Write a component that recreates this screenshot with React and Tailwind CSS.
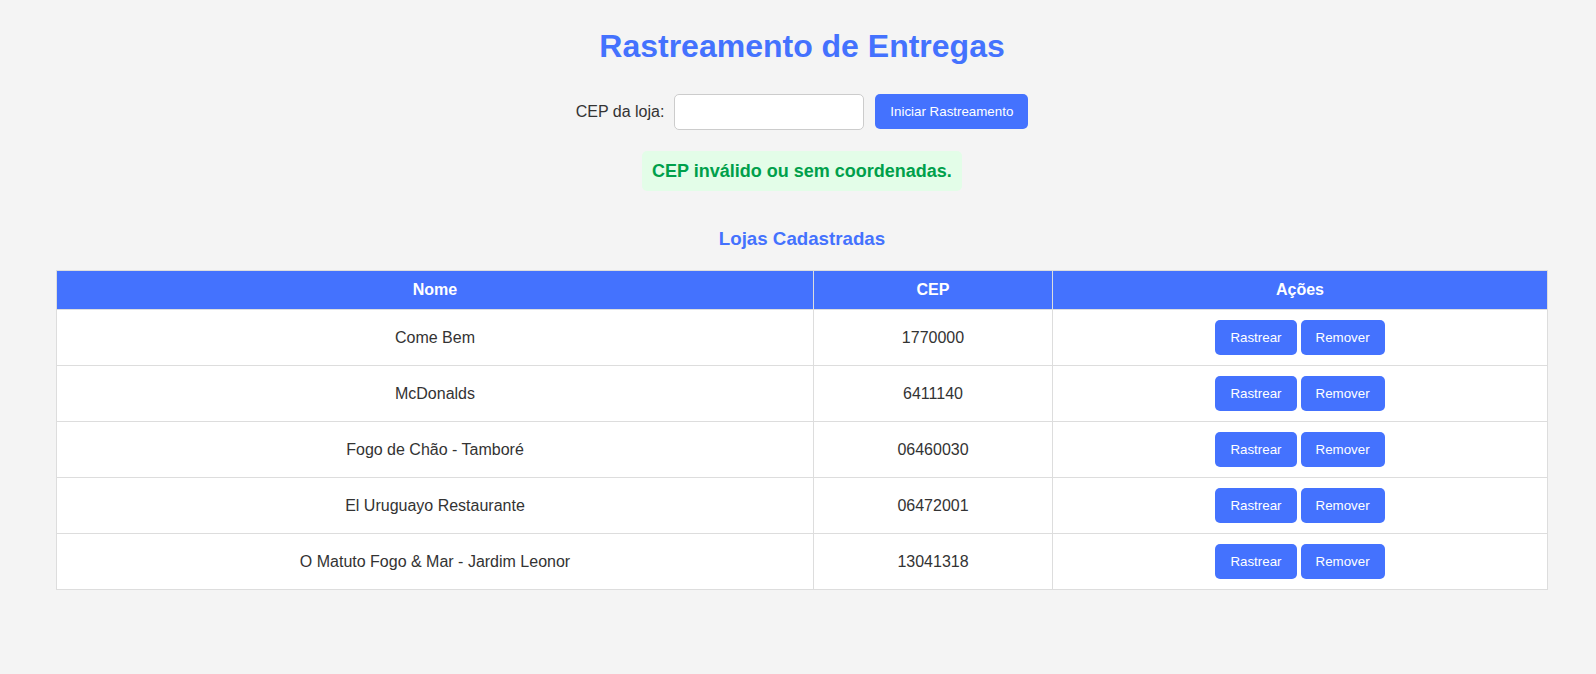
import React from "react";

const lojas = [
  { nome: "Come Bem", cep: "1770000" },
  { nome: "McDonalds", cep: "6411140" },
  { nome: "Fogo de Chão - Tamboré", cep: "06460030" },
  { nome: "El Uruguayo Restaurante", cep: "06472001" },
  { nome: "O Matuto Fogo & Mar - Jardim Leonor", cep: "13041318" },
];

export default function App() {
  return (
    <div
      className="min-h-screen bg-[#f4f4f4] pl-[56px] pr-[48px] pt-[28px] text-[#333]"
      style={{ fontFamily: '"Liberation Sans", Arial, sans-serif' }}
    >
      <h1 className="text-center text-[32px] font-bold leading-[1.15] text-[#4472fe]">
        Rastreamento de Entregas
      </h1>

      <div className="mt-[29px] flex items-center justify-center">
        <label className="mr-[10px] text-[16px] leading-[1.15] text-[#333]">CEP da loja:</label>
        <input
          type="text"
          className="h-[36px] w-[190px] rounded-[5px] border border-[#ccc] bg-white px-[8px] text-[16px] outline-none"
        />
        <button className="ml-[11px] h-[35px] rounded-[5px] bg-[#4472fe] px-[15px] text-[13.333px] leading-[1.15] text-white">
          Iniciar Rastreamento
        </button>
      </div>

      <div className="mt-[21px] flex justify-center">
        <div className="rounded-[5px] bg-[#e3fde8] px-[10px] py-[10px] text-[18px] font-bold leading-[1.15] text-[#00a04b]">
          CEP inválido ou sem coordenadas.
        </div>
      </div>

      <h3 className="mt-[37px] text-center text-[18.72px] font-bold leading-[1.15] text-[#4472fe]">
        Lojas Cadastradas
      </h3>

      <table className="mt-[20px] w-full table-fixed border-collapse border border-[#ddd] bg-white text-[16px] leading-[1.15]">
        <colgroup>
          <col className="w-[757px]" />
          <col className="w-[239px]" />
          <col />
        </colgroup>
        <thead>
          <tr className="bg-[#4472fe] text-white">
            <th className="border border-[#ddd] p-[10px] text-center font-bold">Nome</th>
            <th className="border border-[#ddd] p-[10px] text-center font-bold">CEP</th>
            <th className="border border-[#ddd] p-[10px] text-center font-bold">Ações</th>
          </tr>
        </thead>
        <tbody>
          {lojas.map((l) => (
            <tr key={l.cep}>
              <td className="border border-[#ddd] p-[10px] text-center align-middle text-[#333]">{l.nome}</td>
              <td className="border border-[#ddd] p-[10px] text-center align-middle text-[#333]">{l.cep}</td>
              <td className="border border-[#ddd] p-[10px] text-center align-middle">
                <div className="flex items-center justify-center gap-[4px]">
                  <button className="h-[35px] rounded-[5px] bg-[#4472fe] px-[15px] text-[13.333px] leading-[1.15] text-white">
                    Rastrear
                  </button>
                  <button className="h-[35px] rounded-[5px] bg-[#4472fe] px-[15px] text-[13.333px] leading-[1.15] text-white">
                    Remover
                  </button>
                </div>
              </td>
            </tr>
          ))}
        </tbody>
      </table>
    </div>
  );
}
